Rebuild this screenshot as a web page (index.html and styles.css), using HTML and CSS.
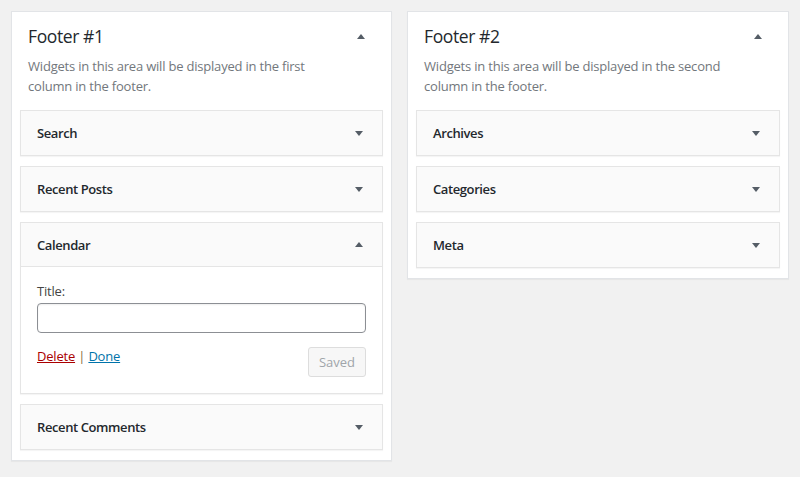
FILE: index.html
```html
<!DOCTYPE html>
<html lang="en">
<head>
<meta charset="utf-8">
<title>Widgets</title>
<link rel="stylesheet" href="styles.css">
</head>
<body>
<div class="wrap">
  <section class="area area-left">
    <div class="area-head">
      <h2>Footer #1</h2>
      <span class="arrow up"></span>
    </div>
    <p class="desc">Widgets in this area will be displayed in the first column in the footer.</p>
    <div class="widget">
      <div class="widget-top"><h3>Search</h3><span class="arrow down"></span></div>
    </div>
    <div class="widget">
      <div class="widget-top"><h3>Recent Posts</h3><span class="arrow down"></span></div>
    </div>
    <div class="widget open">
      <div class="widget-top"><h3>Calendar</h3><span class="arrow up"></span></div>
      <div class="widget-body">
        <label class="field-label" for="cal-title">Title:</label>
        <input class="field" id="cal-title" type="text">
        <div class="controls">
          <div class="links"><a href="#" class="delete">Delete</a> <span class="sep">|</span> <a href="#" class="done">Done</a></div>
          <button class="saved" type="button">Saved</button>
        </div>
      </div>
    </div>
    <div class="widget">
      <div class="widget-top"><h3>Recent Comments</h3><span class="arrow down"></span></div>
    </div>
  </section>
  <section class="area area-right">
    <div class="area-head">
      <h2>Footer #2</h2>
      <span class="arrow up"></span>
    </div>
    <p class="desc">Widgets in this area will be displayed in the second column in the footer.</p>
    <div class="widget">
      <div class="widget-top"><h3>Archives</h3><span class="arrow down"></span></div>
    </div>
    <div class="widget">
      <div class="widget-top"><h3>Categories</h3><span class="arrow down"></span></div>
    </div>
    <div class="widget">
      <div class="widget-top"><h3>Meta</h3><span class="arrow down"></span></div>
    </div>
  </section>
</div>
</body>
</html>
```
FILE: styles.css
```css
* { box-sizing: border-box; }
html, body { margin: 0; padding: 0; }
body {
  background: #f1f1f1;
  font-family: "Open Sans", "Noto Sans", sans-serif;
  font-size: 13px;
  letter-spacing: -0.2px;
  color: #23282d;
  width: 800px;
  height: 477px;
  overflow: hidden;
}
.wrap {
  display: flex;
  align-items: flex-start;
  gap: 15px;
  padding: 11px 0 0 11px;
}
.area {
  background: #fff;
  border: 1px solid #e2e4e7;
  box-shadow: 0 1px 1px rgba(0,0,0,0.04);
  padding: 0 8px 10px 8px;
}
.area-left { width: 381px; }
.area-right { width: 382px; }
.area-head {
  display: flex;
  align-items: center;
  justify-content: space-between;
  padding: 10px 18px 0 8px;
  height: 38px;
}
.area-head h2 {
  margin: 0;
  font-size: 17.5px;
  font-weight: 400;
  letter-spacing: -0.4px;
  line-height: 28px;
  color: #23282d;
}
.desc {
  margin: 0;
  padding: 7px 40px 14px 8px;
  color: #72777c;
  font-size: 13px;
  line-height: 19.5px;
}
.arrow {
  width: 0;
  height: 0;
  border-left: 4px solid transparent;
  border-right: 4px solid transparent;
}
.arrow.up { border-bottom: 5px solid #555d66; }
.arrow.down { border-top: 5px solid #555d66; }
.widget {
  background: #fafafa;
  border: 1px solid #e5e5e5;
  box-shadow: 0 1px 1px rgba(0,0,0,0.04);
  margin-bottom: 10px;
}
.widget:last-child { margin-bottom: 0; }
.widget-top {
  display: flex;
  align-items: center;
  justify-content: space-between;
  height: 44px;
  padding: 0 19px 0 16px;
}
.widget-top h3 {
  margin: 0;
  font-size: 13px;
  font-weight: 600;
  letter-spacing: -0.4px;
  color: #23282d;
}
.widget.open .widget-top { border-bottom: 1px solid #e5e5e5; }
.widget-body {
  background: #fff;
  padding: 15px 16px 16px 16px;
}
.field-label {
  display: block;
  line-height: 19px;
  color: #444;
}
.field {
  display: block;
  width: 100%;
  height: 30px;
  margin-top: 2px;
  border: 1px solid #8c8f94;
  border-radius: 4px;
  box-shadow: inset 0 1px 2px rgba(0,0,0,0.07);
  background: #fff;
  font: inherit;
}
.controls {
  display: flex;
  justify-content: space-between;
  align-items: flex-start;
  margin-top: 13px;
}
.links { line-height: 20px; color: #555; }
.links a { text-decoration: underline; }
.delete { color: #a00; }
.done { color: #0073aa; }
.sep { color: #8a6d3b; }
.saved {
  height: 30px;
  width: 58px;
  padding: 0;
  margin-top: 1px;
  background: #f7f7f7;
  border: 1px solid #ddd;
  border-radius: 3px;
  color: #a0a5aa;
  font: inherit;
  font-size: 13px;
}
```
